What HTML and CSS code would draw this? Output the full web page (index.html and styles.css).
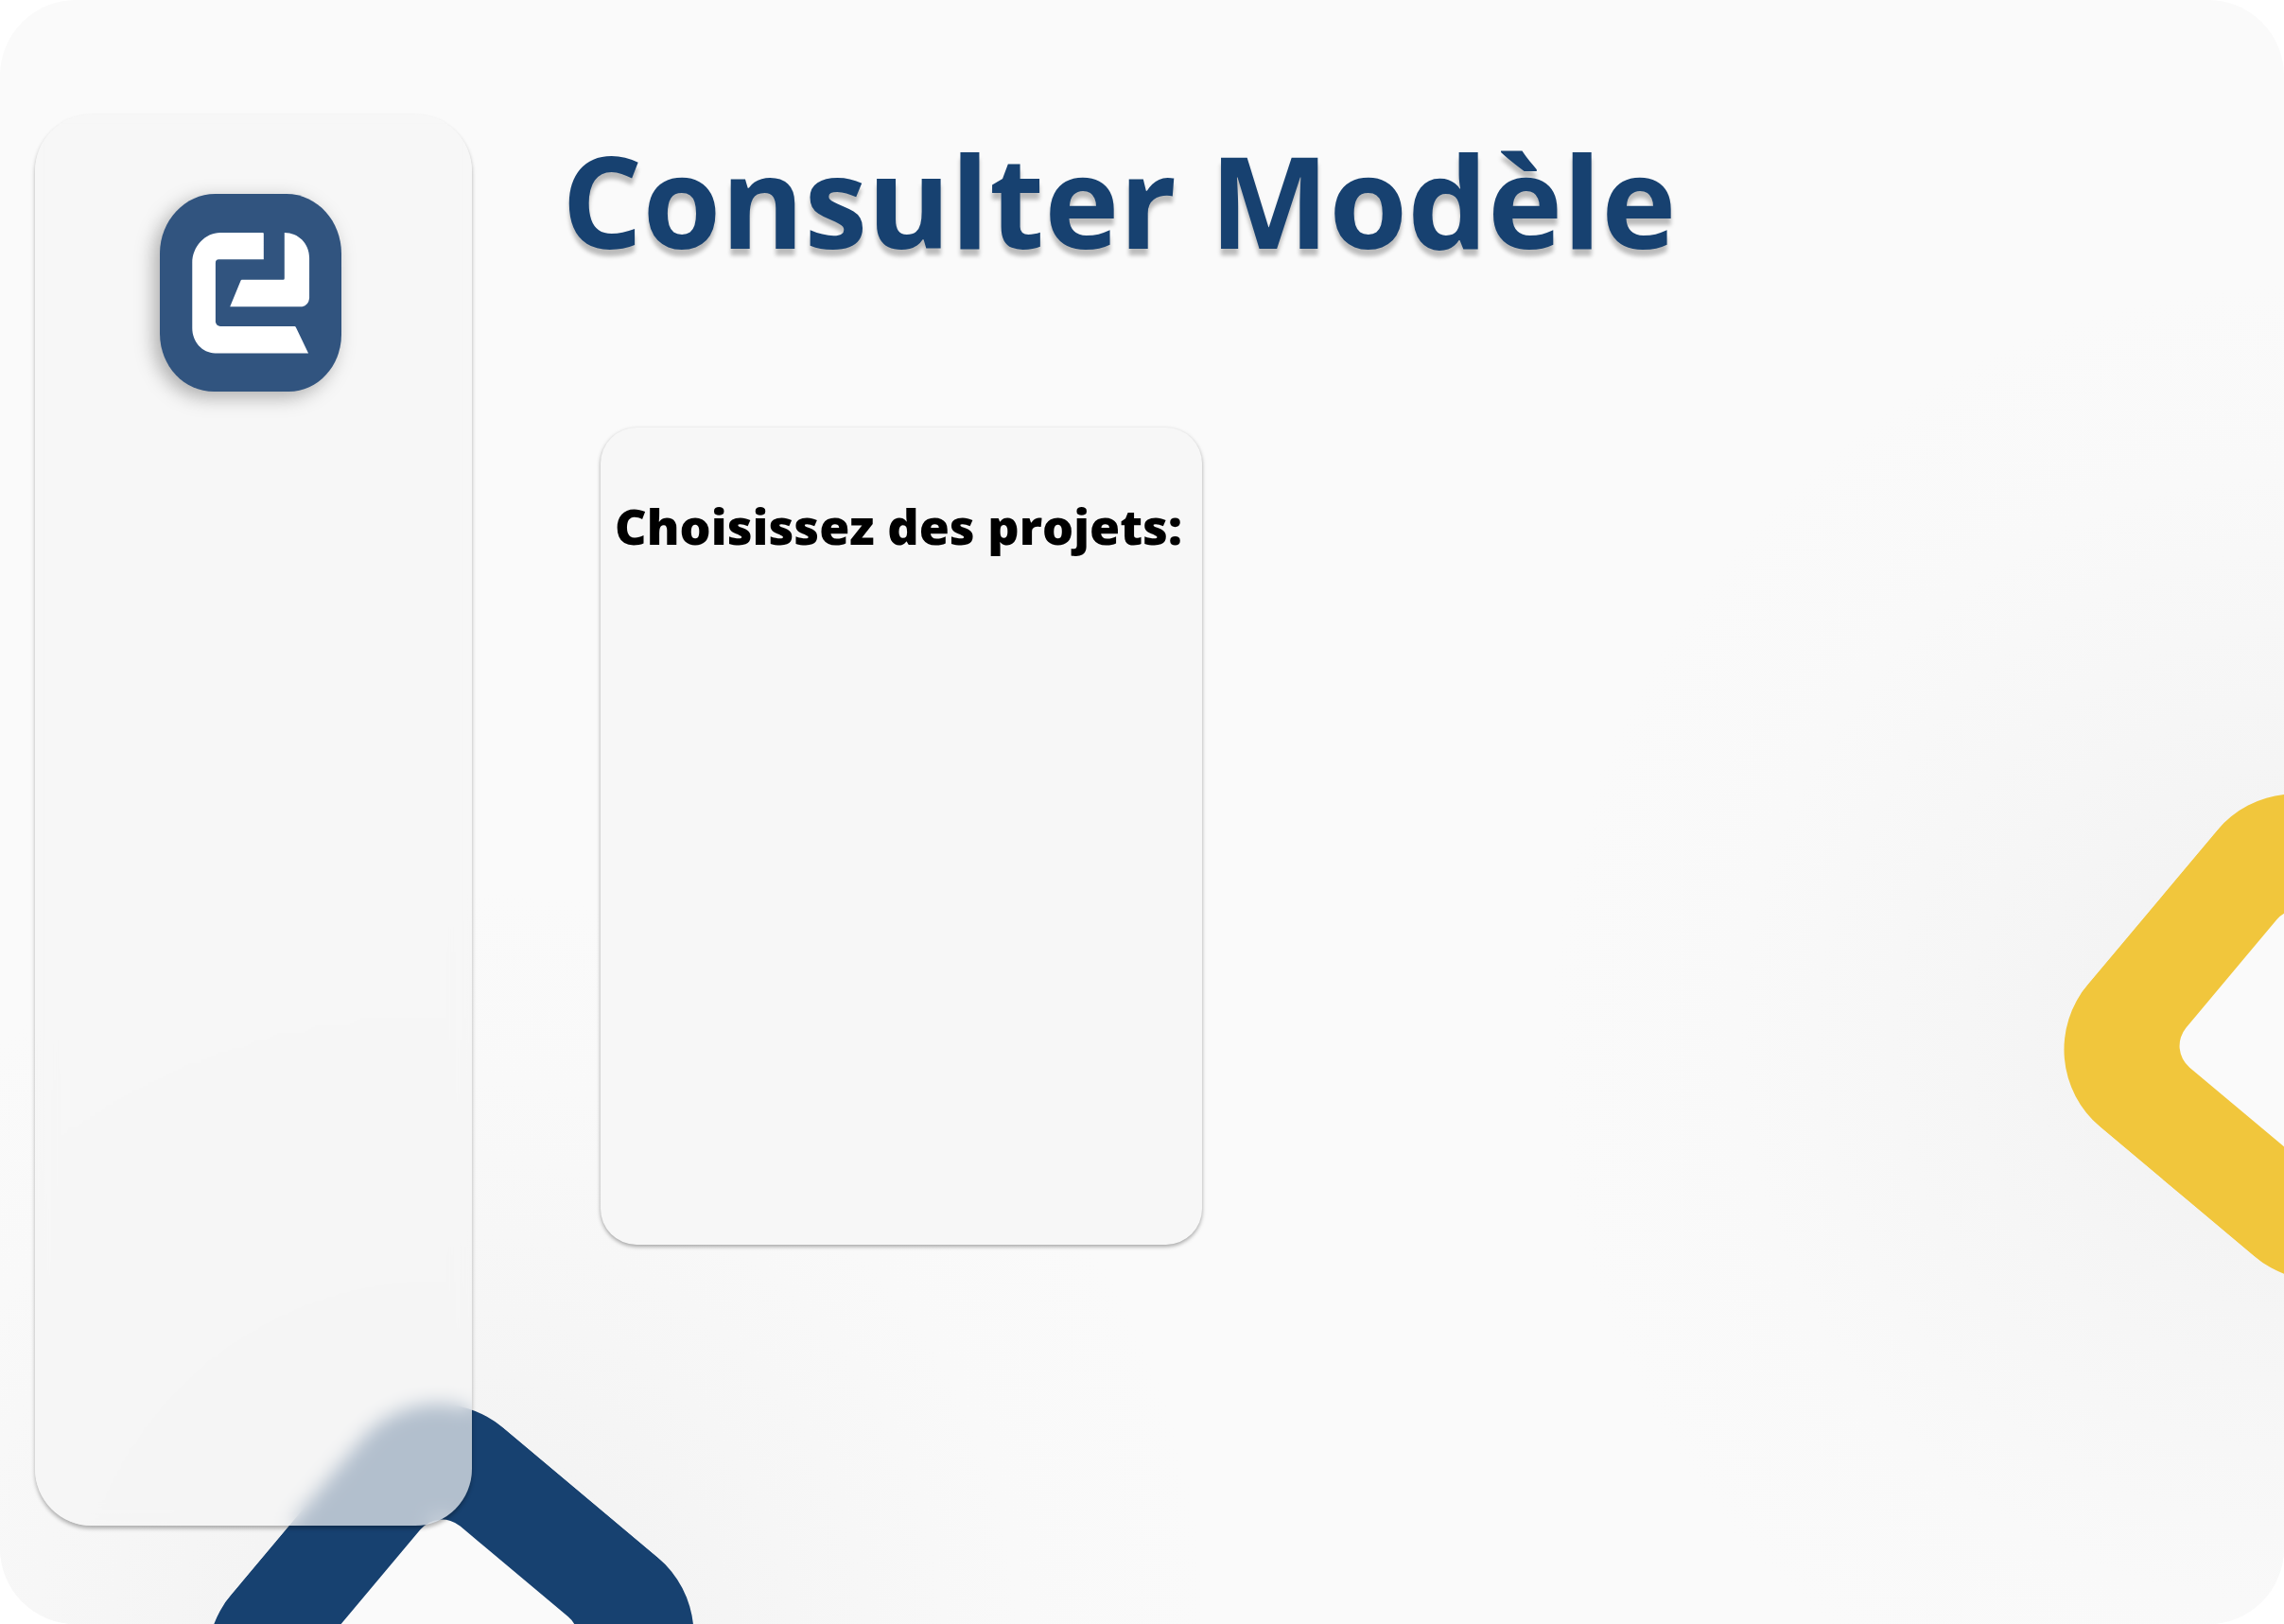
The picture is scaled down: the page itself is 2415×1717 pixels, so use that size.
FILE: index.html
```html
<!DOCTYPE html>
<html lang="fr">
<head>
  <meta charset="utf-8">
  <meta name="viewport" content="width=device-width, initial-scale=1">
  <title>Consulter Modèle</title>
  <link rel="stylesheet" href="styles.css">
</head>
<body>
  <div class="app">
    <div class="halo halo-right"></div>
    <div class="halo halo-bottom"></div>
    <svg class="shape shape-yellow" viewBox="0 0 427 427" aria-hidden="true">
      <rect width="427" height="427" rx="107" fill="currentColor"/>
      <rect x="109" y="109" width="209" height="209" rx="30" fill="#fafafa"/>
    </svg>
    <svg class="shape shape-blue" viewBox="0 0 427 427" aria-hidden="true">
      <rect width="427" height="427" rx="107" fill="currentColor"/>
      <rect x="109" y="109" width="209" height="209" rx="30" fill="#fafafa"/>
    </svg>

    <aside class="sidebar">
      <svg class="logo" viewBox="88 73 577 628" role="img" aria-label="Logo">
        <path fill="#31547f" d="M264 73H490C590 73 665 162 665 262V520C665 620 590 701 498 701H260C165 701 88 620 88 516V262C88 158 168 73 264 73Z"/>
        <path fill="#fff" d="M280 196H415Q418 196 418 199V281H275Q265 281 265 292V480Q268 492 280 494H516Q519 494 521 498L560 579H264C222 579 191 542 191 500V292C191 240 232 196 280 196Z"/>
        <path fill="#fff" d="M484 196C528 196 563 230 563 276V405Q560 428 540 431H311L345 349Q346 346 349 346H480Q484 346 484 341Z"/>
      </svg>
    </aside>

    <main class="content">
      <h1 class="title">Consulter Modèle</h1>
      <section class="card">
        <h2 class="card-title">Choisissez des projets:</h2>
      </section>
    </main>
  </div>
</body>
</html>
```
FILE: styles.css
```css
* {
  box-sizing: border-box;
}

body {
  margin: 0;
  background: #fff;
  font-family: "Open Sans", "Noto Sans", sans-serif;
}

.app {
  position: relative;
  display: flex;
  gap: 95px;
  min-height: 100vh;
  padding: 121px 37px 104px;
  overflow: hidden;
  border-radius: 80px;
  background: #fafafa;
}

/* Decorative background */
.halo {
  position: absolute;
  width: 1600px;
  height: 1600px;
  border-radius: 50%;
  background: radial-gradient(closest-side, #f3f3f3 20%, #f6f6f6 45%, #f9f9f9 75%, transparent);
}

.halo-right {
  top: 64%;
  right: -824px;
  margin-top: -800px;
}

.halo-bottom {
  bottom: -824px;
  left: -323px;
}

.shape {
  position: absolute;
  width: 427px;
  height: 427px;
  transform: rotate(40deg);
}

.shape-yellow {
  top: 64%;
  right: -238px;
  margin-top: -216px;
  color: #f1c63c;
}

.shape-blue {
  bottom: -238px;
  left: 263px;
  color: #174170;
}

/* Sidebar */
.sidebar {
  position: relative;
  flex: none;
  width: 462px;
  padding: 84px 132px;
  border-radius: 60px;
  background: rgba(245, 245, 245, 0.7);
  box-shadow: 0 3px 4px rgba(0, 0, 0, 0.3);
  backdrop-filter: blur(10px);
}

.logo {
  display: block;
  width: 192px;
  height: 209px;
  overflow: visible;
  filter: drop-shadow(-6px 6px 10px rgba(0, 0, 0, 0.3));
}

/* Content */
.content {
  position: relative;
  flex: 1;
  min-width: 0;
}

.title {
  margin: 0;
  color: #174170;
  font-size: 134px;
  font-weight: 700;
  line-height: 180px;
  text-shadow: 0 7px 4px rgba(0, 0, 0, 0.25);
}

.card {
  max-width: 636px;
  min-height: 864px;
  margin: 151px 0 0 41px;
  padding: 68px 15px;
  border-radius: 38px;
  background: #f7f7f7;
  box-shadow: 0 2px 4px rgba(0, 0, 0, 0.35);
}

.card-title {
  margin: 0;
  color: #000;
  font-size: 52px;
  font-weight: 800;
  line-height: 72px;
  white-space: nowrap;
}
```
